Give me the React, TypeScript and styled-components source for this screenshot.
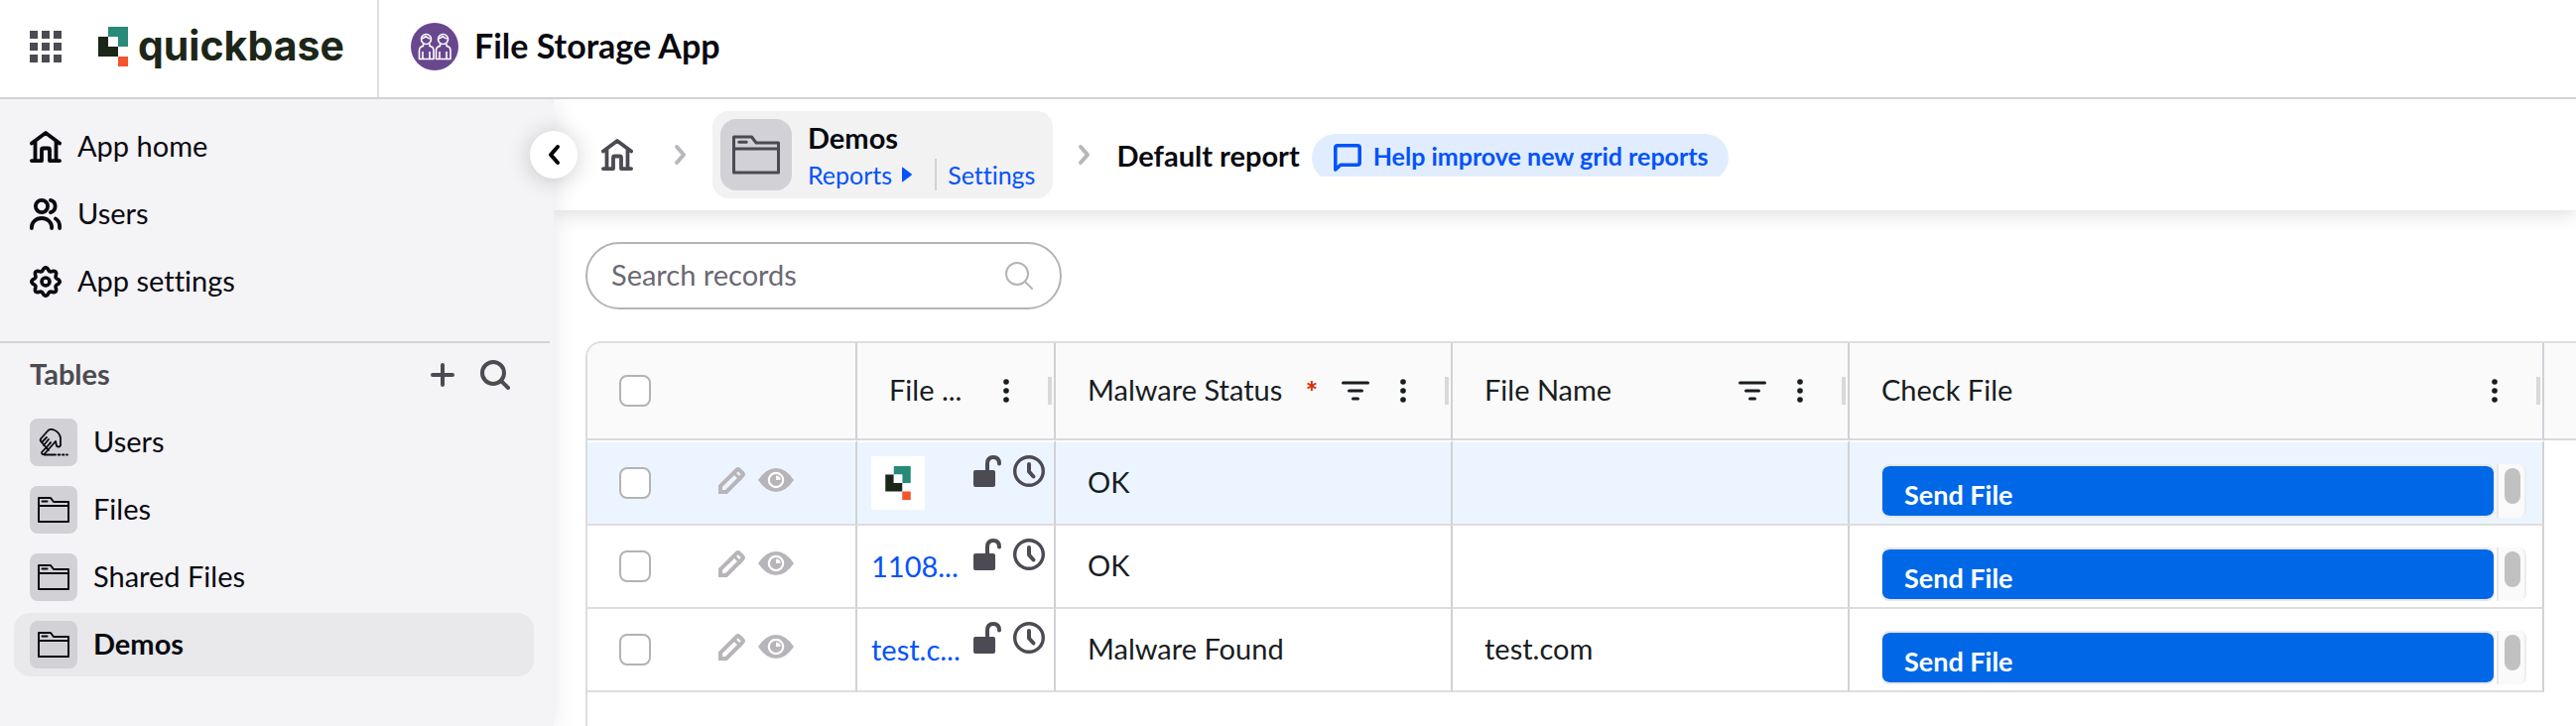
import React from "react";
import styled, { createGlobalStyle } from "styled-components";

const ink = "#090910";
const slate = "#4c4a52";
const gridInk = "#181d1f";
const link = "#0353fa";
const line = "#dddddd";
const columnLine = "#d1d1d6";

const GlobalStyle = createGlobalStyle`
  *, *::before, *::after { box-sizing: border-box; }
  body {
    margin: 0;
    background: #fff;
    color: ${ink};
    font-family: Lato, "Liberation Sans", sans-serif;
    font-size: 29px;
    line-height: 36px;
    font-variant-ligatures: none;
  }
  a { color: inherit; text-decoration: none; }
  button { font: inherit; color: inherit; border: 0; background: none; padding: 0; cursor: pointer; }
  svg { display: block; flex: none; }
`;

const Page = styled.div`
  display: flex;
  flex-direction: column;
  min-height: 100vh;
  overflow: hidden;
`;

const TopBar = styled.header`
  position: relative;
  z-index: 3;
  display: flex;
  align-items: stretch;
  height: 100px;
  border-bottom: 2px solid #d2d1d6;
  background: #fff;
`;

const Brand = styled.div`
  display: flex;
  align-items: center;
  width: 382px;
  padding: 0 0 4px 30px;
  border-right: 2px solid #e0e0e2;
`;

const BrandLink = styled.a`
  display: flex;
  align-items: center;
  gap: 10px;
  margin-left: 37px;
`;

const Wordmark = styled.span`
  padding-bottom: 2px;
  font-family: Inter, "Liberation Sans", sans-serif;
  font-size: 41px;
  line-height: 52px;
  font-weight: 700;
  color: #1c2618;
`;

const AppTitle = styled.h1`
  display: flex;
  align-items: center;
  gap: 16px;
  margin: 0;
  padding: 0 0 4px 32px;
  font-size: 34px;
  line-height: 40px;
  font-weight: 700;
`;

const Body = styled.div`
  display: flex;
  flex: 1;
`;

const Sidebar = styled.aside`
  position: relative;
  z-index: 2;
  flex: none;
  width: 558px;
  background: #f4f3f6;
  border-top-right-radius: 8px;
  box-shadow: 0 0 24px rgba(0, 0, 0, 0.1);
`;

const CollapseButton = styled.button`
  position: absolute;
  top: 32px;
  right: -24px;
  display: grid;
  place-items: center;
  width: 48px;
  height: 48px;
  border-radius: 50%;
  background: #fff;
  box-shadow: 0 2px 24px rgba(0, 0, 0, 0.2);
`;

const MainNav = styled.nav`
  display: flex;
  flex-direction: column;
  margin-right: 4px;
  padding: 14px 14px 26px;
  border-bottom: 2px solid #d2d1d6;
`;

const NavLink = styled.a`
  display: flex;
  align-items: center;
  gap: 16px;
  height: 68px;
  padding: 0 16px;
`;

const Label = styled.span`
  padding-bottom: 3px;
`;

const TablesHeader = styled.div`
  display: flex;
  align-items: center;
  gap: 24px;
  height: 64px;
  padding: 0 44px 0 30px;
  color: ${slate};
`;

const TablesTitle = styled.h2`
  flex: 1;
  margin: 0;
  padding-bottom: 3px;
  font-size: 29px;
  line-height: 36px;
  font-weight: 700;
`;

const TableList = styled.nav`
  display: flex;
  flex-direction: column;
  gap: 4px;
  padding: 4px 20px 0 14px;
`;

const TableLink = styled.a<{ $active?: boolean }>`
  display: flex;
  align-items: center;
  gap: 16px;
  height: 64px;
  padding: 0 16px;
  border-radius: 16px;
  background: ${(p) => (p.$active ? "#e9e9eb" : "transparent")};
  font-weight: ${(p) => (p.$active ? 700 : 400)};
`;

const Tile = styled.span<{ $large?: boolean }>`
  display: grid;
  place-items: center;
  width: ${(p) => (p.$large ? 72 : 48)}px;
  height: ${(p) => (p.$large ? 72 : 48)}px;
  border-radius: ${(p) => (p.$large ? 16 : 8)}px;
  background: #d2d1d6;
  color: ${(p) => (p.$large ? slate : ink)};
`;

const Main = styled.main`
  display: flex;
  flex-direction: column;
  flex: 1;
  min-width: 0;
`;

const Breadcrumbs = styled.nav`
  position: relative;
  z-index: 1;
  display: flex;
  align-items: center;
  height: 112px;
  padding-left: 48px;
  background: #fff;
  color: ${slate};
  box-shadow: 0 2px 20px rgba(0, 0, 0, 0.16);
`;

const Separator = styled.span<{ $wide?: boolean }>`
  display: grid;
  place-items: center;
  width: ${(p) => (p.$wide ? 80 : 64)}px;
  padding-left: ${(p) => (p.$wide ? 16 : 0)}px;
`;

const TableCard = styled.div`
  display: flex;
  align-items: center;
  gap: 16px;
  height: 88px;
  padding: 0 18px 0 8px;
  border-radius: 16px;
  background: #f2f2f2;
  color: ${ink};
`;

const CardName = styled.div`
  margin-bottom: 3px;
  font-weight: 700;
`;

const CardLinks = styled.div`
  display: flex;
  align-items: center;
  height: 32px;
  font-size: 25px;
  line-height: 32px;
  color: ${link};
`;

const ReportsLink = styled.a`
  display: flex;
  align-items: center;
  gap: 10px;
  height: 32px;
  margin-right: 11px;
  padding-right: 23px;
  border-right: 2px solid #d2d1d6;
`;

const ReportName = styled.h2`
  margin: 0;
  padding-top: 2px;
  font-size: 29px;
  line-height: 36px;
  font-weight: 700;
  color: ${ink};
`;

const BadgeClip = styled.div`
  height: 43px;
  margin-left: 12px;
  overflow: hidden;
`;

const FeedbackLink = styled.a`
  display: flex;
  align-items: center;
  gap: 12px;
  height: 48px;
  padding: 0 20px 0 22px;
  border-radius: 24px;
  background: #e1edff;
  color: ${link};
  font-size: 25px;
  line-height: 32px;
  font-weight: 700;
`;

const Content = styled.section`
  display: flex;
  flex-direction: column;
  gap: 32px;
  flex: 1;
  padding: 32px 0 0 32px;
`;

const SearchBox = styled.label`
  display: flex;
  align-items: center;
  width: 480px;
  height: 68px;
  padding: 0 26px 0 24px;
  border: 2px solid #b4b3b8;
  border-radius: 34px;
  color: #b4b3b8;
`;

const SearchInput = styled.input`
  flex: 1;
  min-width: 0;
  padding: 0 0 2px;
  border: 0;
  outline: 0;
  background: none;
  font: inherit;
  color: ${ink};
  &::placeholder { color: #6b6974; opacity: 1; }
`;

const GridFrame = styled.div`
  flex: 1;
  overflow: hidden;
  border-top: 2px solid ${line};
  border-left: 2px solid ${line};
  border-top-left-radius: 16px;
`;

const Grid = styled.table`
  width: 100%;
  table-layout: fixed;
  border-collapse: separate;
  border-spacing: 0;
  color: ${gridInk};
`;

const Column = styled.col<{ $width?: number }>`
  width: ${(p) => (p.$width ? `${p.$width}px` : "auto")};
`;

const HeadCell = styled.th`
  height: 98px;
  padding: 0 2px 0 32px;
  border-right: 2px solid ${columnLine};
  border-bottom: 2px solid #d9d9d9;
  background: #fafafa;
  font-weight: 400;
  text-align: left;
  &:last-child { border-right: 0; }
`;

const HeadContent = styled.div`
  display: flex;
  align-items: center;
`;

const HeadLabel = styled.span`
  flex: 1;
  padding-bottom: 3px;
  white-space: nowrap;
`;

const Required = styled.span`
  margin-right: 24px;
  color: #d93008;
  font-weight: 900;
`;

const HeadButton = styled.button`
  display: grid;
  place-items: center;
  width: 28px;
  height: 32px;
`;

const HeadMenu = styled(HeadButton)`
  margin: 0 28px 0 20px;
`;

const ResizeHandle = styled.span`
  width: 4px;
  height: 28px;
  background: #d8d9d9;
`;

const Row = styled.tr<{ $selected?: boolean }>`
  background: ${(p) => (p.$selected ? "#ecf5ff" : "#fff")};
`;

const Cell = styled.td`
  height: 84px;
  padding: 0 0 0 32px;
  border-right: 2px solid ${columnLine};
  border-bottom: 2px solid ${line};
  ${Row}:first-child & {
    height: 86px;
    border-top: 2px solid #fff;
  }
`;

const TextCell = styled(Cell)`
  padding-bottom: 3px;
`;

const Filler = styled.td`
  background: #fff;
`;

const Checkbox = styled.input`
  display: block;
  appearance: none;
  width: 32px;
  height: 32px;
  margin: 0;
  border: 2px solid #b3b3b3;
  border-radius: 8px;
  background: #fff;
`;

const RowTools = styled.div`
  display: flex;
  align-items: center;
  color: #b8b5ba;
`;

const EditButton = styled.button`
  margin: 0 13px 6px 68px;
`;

const ViewButton = styled.button`
  margin-bottom: 6px;
`;

const FileContent = styled.div`
  display: flex;
  align-items: center;
  justify-content: space-between;
  height: 82px;
  margin-left: -18px;
  padding-right: 9px;
`;

const FileLink = styled.a`
  color: ${link};
`;

const Thumbnail = styled.a`
  display: grid;
  place-items: center;
  width: 54px;
  height: 54px;
  background: #fff;
`;

const FileActions = styled.div`
  display: flex;
  align-self: flex-start;
  gap: 12px;
  padding-top: 13px;
  color: ${slate};
`;

const CheckFrame = styled.div`
  display: flex;
  gap: 2px;
  height: 54px;
  margin: 16px 16px 0 0;
`;

const SendButton = styled.button`
  flex: 1;
  padding: 8px 22px 0;
  border: 1px solid #e7e7ea;
  border-width: 2px 1px;
  border-radius: 8px;
  background: #0068e6;
  background-clip: padding-box;
  color: #fff;
  font-size: 27px;
  font-weight: 700;
  text-align: left;
`;

const ScrollTrack = styled.span`
  width: 30px;
  padding: 4px 0 0 6px;
  border-left: 2px solid #e8e8e8;
  border-right: 2px solid #ededed;
  border-radius: 0 8px 8px 0;
  background: #fafafa;
`;

const ScrollThumb = styled.span`
  display: block;
  width: 16px;
  height: 36px;
  border-radius: 8px;
  background: #c1c1c1;
`;

const stroke = {
  fill: "none",
  stroke: "currentColor",
  strokeLinecap: "round" as const,
  strokeLinejoin: "round" as const,
};

const LauncherIcon = () => (
  <svg width="32" height="32" viewBox="0 0 32 32" fill={slate}>
    {[0, 12, 24].map((y) => [0, 12, 24].map((x) => <rect key={`${x}-${y}`} x={x} y={y} width="8" height="8" />))}
  </svg>
);

const Mark = ({ width, height }: { width: number; height: number }) => (
  <svg width={width} height={height} viewBox="0 0 30 40">
    <path d="M10 0h20v20H20V10H10z" fill="#288a78" />
    <path d="M0 10h10v10h10v10H0z" fill="#1c2618" />
    <path d="M10 10h10v10H10z" fill="#fff" />
    <path d="M20 30h10v10H20z" fill="#f5532b" />
  </svg>
);

const AppBadge = () => (
  <svg width="48" height="48" viewBox="0 0 48 48">
    <circle cx="24" cy="24" r="24" fill="#68478f" />
    <g fill="none" stroke="#fff" strokeWidth="1.6" strokeLinejoin="round">
      {[15.5, 32.5].map((x) => (
        <g key={x} transform={`translate(${x} 0)`}>
          <circle cx="0" cy="16.5" r="5" />
          <path d="M-4.500 16q3-1 4-2.500 2 2 4.500 2.500M-3 21v2.500q-4 .5-4 4.500v8.500H7.500V28q0-4-4-4.500V21M-3.500 36v-7M3.500 36v-7" />
        </g>
      ))}
    </g>
  </svg>
);

const HomeIcon = () => (
  <svg width="32" height="32" viewBox="0 0 32 32" {...stroke} strokeWidth="3.8">
    <path d="M1.900 12.500 16 2l14.100 10.500M5.500 11v19M26.500 11v19M1.900 30.100H12V19q0-1.500 1.500-1.500h5q1.500 0 1.500 1.500v11.100h10.100" />
  </svg>
);

const PeopleIcon = () => (
  <svg width="32" height="32" viewBox="0 0 32 32" {...stroke} strokeWidth="3.8">
    <circle cx="12" cy="8" r="6.100" />
    <path d="M1.900 30v-1a10.100 9 0 0 1 20.200 0v1M21 1.900a6.400 6.400 0 0 1 0 12.300M26 20.500q4.100 2.500 4.100 8V30" />
  </svg>
);

const gearPath =
  Array.from({ length: 96 }, (_, i) => {
    const a = (i / 96) * Math.PI * 2;
    const r = 12.6 + 1.6 * Math.cos(8 * a);
    return `${i ? "L" : "M"}${(16 + r * Math.sin(a)).toFixed(2)} ${(16 - r * Math.cos(a)).toFixed(2)}`;
  }).join("") + "z";

const GearIcon = () => (
  <svg width="32" height="32" viewBox="0 0 32 32" {...stroke} strokeWidth="3.6">
    <path d={gearPath} />
    <circle cx="16" cy="16" r="4" />
  </svg>
);

const PlusIcon = () => (
  <svg width="28" height="28" viewBox="0 0 28 28" {...stroke} strokeWidth="4">
    <path d="M14 4v20M4 14h20" />
  </svg>
);

const SearchIcon = ({ weight }: { weight: number }) => (
  <svg width="30" height="30" viewBox="0 0 30 30" {...stroke} strokeWidth={weight}>
    <circle cx="13" cy="13" r="11" />
    <path d="m21 21 7 7" />
  </svg>
);

const HandIcon = () => (
  <svg width="48" height="48" viewBox="0 0 48 48" {...stroke} strokeWidth="1.8">
    <path d="M11 20.500 18.500 12q2.500-2 6-.5 5.500 2.500 6.500 8v7.500q-1.500 3-4 .5l-1-4.500-11.500 13q-2.500.5-2.500-2L21 24.500M11 20.500q-1 2 1 3.500l7 8M12 24l5-5M14 27l5-6M17 29l4-5" />
    <path d="M14.500 36.500H26M28.500 36.500h2M33 36.500h1.500M37 36.500h1" />
  </svg>
);

const FolderIcon = ({ size }: { size: number }) => (
  <svg width={size} height={size} viewBox="0 0 48 48" {...stroke} strokeWidth="2">
    <path d="M9 36V12h12l3 4h15v20zM9 20h30M12.500 15.500h5" />
  </svg>
);

const Chevron = ({ left }: { left?: boolean }) => (
  <svg width="14" height="24" viewBox="0 0 14 24" {...stroke} stroke={left ? "#000" : "#b8b6bb"} strokeWidth="4">
    <path d={left ? "M11 4 4 12l7 8" : "m3 4 7 8-7 8"} />
  </svg>
);

const TriangleIcon = () => (
  <svg width="10" height="16" viewBox="0 0 10 16" fill="currentColor">
    <path d="M0 1.500Q0 0 1.200 1L9.500 7.300q.7.700 0 1.400L1.200 15Q0 16 0 14.500z" />
  </svg>
);

const ChatIcon = () => (
  <svg width="28" height="28" viewBox="0 0 28 28" {...stroke} strokeWidth="3.600">
    <path d="M1.800 26V4q0-2.200 2.200-2.200h20q2.200 0 2.200 2.200v15q0 2.200-2.200 2.200H7z" />
  </svg>
);

const FilterIcon = () => (
  <svg width="28" height="22" viewBox="0 0 28 22" {...stroke} strokeWidth="3">
    <path d="M1.500 3h25M7.500 11h13M11.500 19h5" />
  </svg>
);

const DotsIcon = () => (
  <svg width="8" height="26" viewBox="0 0 8 26" fill="currentColor">
    <circle cx="4" cy="4" r="2.800" />
    <circle cx="4" cy="13" r="2.800" />
    <circle cx="4" cy="22" r="2.800" />
  </svg>
);

const PencilIcon = () => (
  <svg width="27" height="27" viewBox="0 0 27 27" {...stroke} strokeLinejoin="miter" strokeWidth="4">
    <path d="M2 25v-6L18.500 2.800q1.300-1.300 2.600 0l3.200 3.200q1.200 1.200 0 2.500L8 25z" />
    <path d="m16 6 6 6" strokeWidth="3" />
  </svg>
);

const EyeIcon = () => (
  <svg width="36" height="24" viewBox="0 0 36 24">
    <path d="M0 12Q8 0 18 0t18 12q-8 12-18 12T0 12z" fill="currentColor" />
    <circle cx="18" cy="12" r="7.200" fill="none" stroke="#fff" strokeWidth="2.200" />
    <path d="M18 12V7.500q5 .5 4.500 4.500z" fill="#fff" />
  </svg>
);

const UnlockIcon = () => (
  <svg width="28" height="32" viewBox="0 0 28 32">
    <rect x="0" y="15" width="22" height="17" rx="2" fill="currentColor" />
    <path d="M14 16V8.500q0-6.500 6-6.500t6 6.500" {...stroke} strokeWidth="4" />
  </svg>
);

const ClockIcon = () => (
  <svg width="32" height="32" viewBox="0 0 32 32" {...stroke} strokeWidth="3.400">
    <circle cx="16" cy="16" r="14.300" />
    <path d="M16 9v7.500l4.500 5" strokeWidth="4" />
  </svg>
);

const navItems = [
  { label: "App home", icon: <HomeIcon /> },
  { label: "Users", icon: <PeopleIcon /> },
  { label: "App settings", icon: <GearIcon /> },
];

const tables = ["Users", "Files", "Shared Files", "Demos"];

const columns = [
  { label: "File ..." },
  { label: "Malware Status", required: true, filter: true },
  { label: "File Name", filter: true },
  { label: "Check File" },
];

const records = [
  { file: null, status: "OK", name: "", selected: true },
  { file: "1108...", status: "OK", name: "", selected: false },
  { file: "test.c...", status: "Malware Found", name: "test.com", selected: false },
];

export default function App() {
  return (
    <Page>
      <GlobalStyle />
      <TopBar>
        <Brand>
          <button aria-label="App launcher">
            <LauncherIcon />
          </button>
          <BrandLink href="#">
            <Mark width={30} height={40} />
            <Wordmark>quickbase</Wordmark>
          </BrandLink>
        </Brand>
        <AppTitle>
          <AppBadge />
          <Label>File Storage App</Label>
        </AppTitle>
      </TopBar>
      <Body>
        <Sidebar>
          <CollapseButton aria-label="Collapse sidebar">
            <Chevron left />
          </CollapseButton>
          <MainNav>
            {navItems.map((item) => (
              <NavLink href="#" key={item.label}>
                {item.icon}
                <Label>{item.label}</Label>
              </NavLink>
            ))}
          </MainNav>
          <TablesHeader>
            <TablesTitle>Tables</TablesTitle>
            <button aria-label="Add table">
              <PlusIcon />
            </button>
            <button aria-label="Search tables">
              <SearchIcon weight={4} />
            </button>
          </TablesHeader>
          <TableList>
            {tables.map((name) => (
              <TableLink href="#" key={name} $active={name === "Demos"}>
                <Tile>{name === "Users" ? <HandIcon /> : <FolderIcon size={48} />}</Tile>
                <Label>{name}</Label>
              </TableLink>
            ))}
          </TableList>
        </Sidebar>
        <Main>
          <Breadcrumbs aria-label="Breadcrumb">
            <a href="#" aria-label="App home">
              <HomeIcon />
            </a>
            <Separator $wide>
              <Chevron />
            </Separator>
            <TableCard>
              <Tile $large>
                <FolderIcon size={72} />
              </Tile>
              <div>
                <CardName>Demos</CardName>
                <CardLinks>
                  <ReportsLink href="#">
                    Reports
                    <TriangleIcon />
                  </ReportsLink>
                  <a href="#">Settings</a>
                </CardLinks>
              </div>
            </TableCard>
            <Separator>
              <Chevron />
            </Separator>
            <ReportName>Default report</ReportName>
            <BadgeClip>
              <FeedbackLink href="#">
                <ChatIcon />
                <Label>Help improve new grid reports</Label>
              </FeedbackLink>
            </BadgeClip>
          </Breadcrumbs>
          <Content>
            <SearchBox>
              <SearchInput type="text" placeholder="Search records" aria-label="Search records" />
              <SearchIcon weight={2} />
            </SearchBox>
            <GridFrame>
              <Grid>
                <colgroup>
                  <Column $width={272} />
                  <Column $width={200} />
                  <Column $width={400} />
                  <Column $width={400} />
                  <Column $width={700} />
                  <Column />
                </colgroup>
                <thead>
                  <tr>
                    <HeadCell>
                      <Checkbox type="checkbox" aria-label="Select all records" />
                    </HeadCell>
                    {columns.map((column) => (
                      <HeadCell key={column.label}>
                        <HeadContent>
                          <HeadLabel>{column.label}</HeadLabel>
                          {column.required && <Required>*</Required>}
                          {column.filter && (
                            <HeadButton aria-label={`Filter ${column.label}`}>
                              <FilterIcon />
                            </HeadButton>
                          )}
                          <HeadMenu aria-label={`${column.label} menu`}>
                            <DotsIcon />
                          </HeadMenu>
                          <ResizeHandle />
                        </HeadContent>
                      </HeadCell>
                    ))}
                    <HeadCell />
                  </tr>
                </thead>
                <tbody>
                  {records.map((record, i) => (
                    <Row key={i} $selected={record.selected}>
                      <Cell>
                        <RowTools>
                          <Checkbox type="checkbox" aria-label={`Select record ${i + 1}`} />
                          <EditButton aria-label="Edit record">
                            <PencilIcon />
                          </EditButton>
                          <ViewButton aria-label="View record">
                            <EyeIcon />
                          </ViewButton>
                        </RowTools>
                      </Cell>
                      <Cell>
                        <FileContent>
                          {record.file ? (
                            <FileLink href="#">{record.file}</FileLink>
                          ) : (
                            <Thumbnail href="#" aria-label="Preview image">
                              <Mark width={26} height={34} />
                            </Thumbnail>
                          )}
                          <FileActions>
                            <button aria-label="Unlock file">
                              <UnlockIcon />
                            </button>
                            <button aria-label="File history">
                              <ClockIcon />
                            </button>
                          </FileActions>
                        </FileContent>
                      </Cell>
                      <TextCell>{record.status}</TextCell>
                      <TextCell>{record.name}</TextCell>
                      <Cell>
                        <CheckFrame>
                          <SendButton>Send File</SendButton>
                          <ScrollTrack>
                            <ScrollThumb />
                          </ScrollTrack>
                        </CheckFrame>
                      </Cell>
                      <Filler />
                    </Row>
                  ))}
                </tbody>
              </Grid>
            </GridFrame>
          </Content>
        </Main>
      </Body>
    </Page>
  );
}
